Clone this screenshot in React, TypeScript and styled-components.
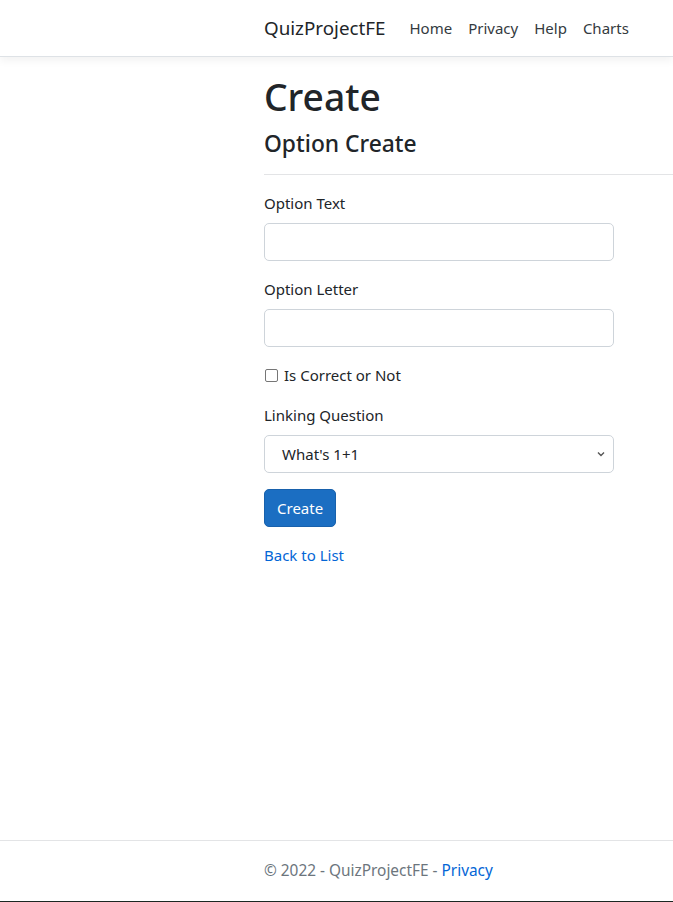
import React from "react";
import styled, { createGlobalStyle } from "styled-components";

const FONT = `"Noto Sans", "Liberation Sans", sans-serif`;

const Global = createGlobalStyle`
  html, body { margin: 0; padding: 0; background: #fff; }
  body {
    font-family: ${FONT};
    font-size: 15px;
    line-height: 24px;
    color: #212529;
  }
  * { box-sizing: border-box; }
`;

const Page = styled.div`
  position: relative;
  min-height: 902px;
  border-bottom: 1px solid #1c2622;
  overflow: hidden;
`;

const NavBar = styled.header`
  height: 57px;
  background: #fff;
  border-bottom: 1px solid #dee2e6;
  box-shadow: 0 4px 8px rgba(0, 0, 0, 0.05);
  display: flex;
  align-items: center;
  padding-left: 264px;
  margin-bottom: 16px;
`;

const Brand = styled.a`
  font-size: 18.8px;
  line-height: 30px;
  color: #212529;
  text-decoration: none;
  margin-right: 16px;
`;

const NavList = styled.nav`
  display: flex;
`;

const NavLink = styled.a`
  padding: 8px;
  font-size: 15px;
  color: #343a40;
  text-decoration: none;
`;

const Main = styled.main`
  padding-left: 264px;
`;

const Title = styled.h1`
  margin: 0 0 8px;
  font-size: 37.2px;
  font-weight: 500;
  line-height: 48px;
`;

const SubTitle = styled.h4`
  margin: 0;
  font-size: 22.8px;
  font-weight: 500;
  line-height: 29px;
`;

const Rule = styled.hr`
  margin: 16px 0;
  border: 0;
  border-top: 1px solid #e3e4e6;
`;

const Form = styled.form`
  width: 350px;
  display: flex;
  flex-direction: column;
  gap: 16px;
`;

const Field = styled.div`
  display: flex;
  flex-direction: column;
  gap: 8px;
`;

const Label = styled.label`
  line-height: 24px;
`;

const Input = styled.input`
  height: 38px;
  width: 100%;
  border: 1px solid #ced4da;
  border-radius: 5px;
  padding: 6px 12px;
  font: inherit;
`;

const CheckRow = styled.label`
  display: flex;
  align-items: center;
  gap: 6px;
  line-height: 24px;
`;

const Box = styled.span`
  width: 13px;
  height: 13px;
  border: 1px solid #767676;
  border-radius: 2px;
  margin-left: 1px;
`;

const SelectBox = styled.div`
  height: 38px;
  border: 1px solid #ced4da;
  border-radius: 5px;
  display: flex;
  align-items: center;
  justify-content: space-between;
  padding: 0 6px 0 17px;
  color: #212529;
`;

const Button = styled.button`
  align-self: flex-start;
  height: 38px;
  padding: 0 12px;
  background: #1b6ec2;
  border: 1px solid #1861ac;
  border-radius: 5px;
  color: #fff;
  font: inherit;
`;

const BackLink = styled.a`
  color: #0366d6;
  text-decoration: none;
  margin-top: 16px;
  display: block;
  line-height: 24px;
`;

const Footer = styled.footer`
  position: absolute;
  left: 0;
  right: 0;
  bottom: 0;
  border-top: 1px solid #e3e4e6;
  line-height: 60px;
  padding-left: 264px;
  color: #6c757d;
  white-space: nowrap;
  font-size: 15.4px;
`;

const FooterLink = styled.a`
  color: #0366d6;
  text-decoration: none;
`;

export default function App() {
  return (
    <Page>
      <Global />
      <NavBar>
        <Brand href="#">QuizProjectFE</Brand>
        <NavList>
          <NavLink href="#">Home</NavLink>
          <NavLink href="#">Privacy</NavLink>
          <NavLink href="#">Help</NavLink>
          <NavLink href="#">Charts</NavLink>
        </NavList>
      </NavBar>
      <Main>
        <Title>Create</Title>
        <SubTitle>Option Create</SubTitle>
        <Rule />
        <Form onSubmit={(e) => e.preventDefault()}>
          <Field>
            <Label>Option Text</Label>
            <Input />
          </Field>
          <Field>
            <Label>Option Letter</Label>
            <Input />
          </Field>
          <CheckRow>
            <Box />
            Is Correct or Not
          </CheckRow>
          <Field>
            <Label>Linking Question</Label>
            <SelectBox>
              <span>What's 1+1</span>
              <svg width="12" height="12" viewBox="0 0 12 12">
                <path d="M3 4.5 L6 7.5 L9 4.5" fill="none" stroke="#555" strokeWidth="1.4" />
              </svg>
            </SelectBox>
          </Field>
          <Button type="submit">Create</Button>
        </Form>
        <BackLink href="#">Back to List</BackLink>
      </Main>
      <Footer>
        © 2022 - QuizProjectFE - <FooterLink href="#">Privacy</FooterLink>
      </Footer>
    </Page>
  );
}
